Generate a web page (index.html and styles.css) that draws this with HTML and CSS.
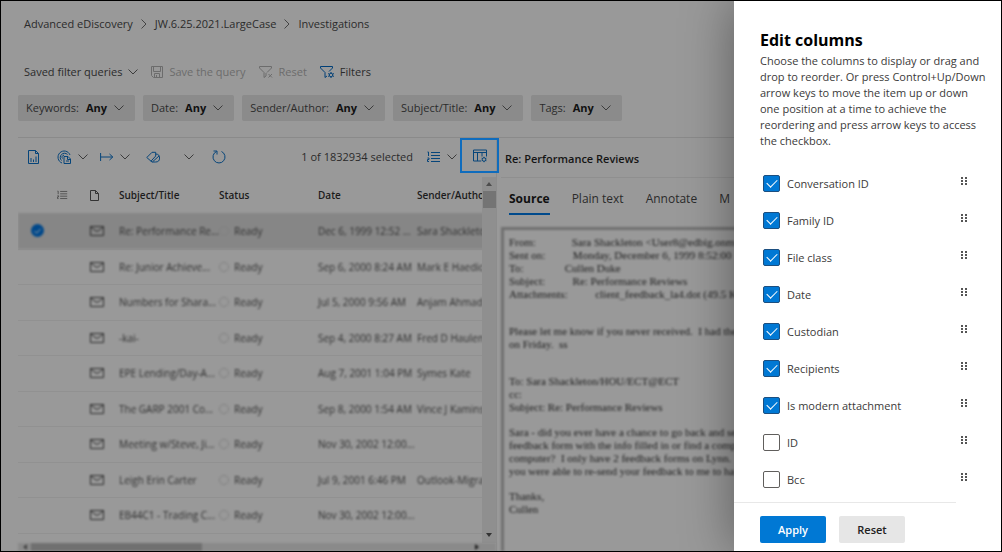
FILE: index.html
```html
<!DOCTYPE html>
<html lang="en">
<head>
<meta charset="utf-8">
<title>Advanced eDiscovery - Investigations</title>
<link rel="stylesheet" href="styles.css">
</head>
<body>
<svg class="defs" aria-hidden="true">
  <symbol id="chev" viewBox="0 0 10 6"><path d="M.5.5 5 5 9.500.5"/></symbol>
  <symbol id="mail" viewBox="0 0 14 10"><path d="M.5.5h13v9H.500zM.5 1 7 5.500 13.500 1"/></symbol>
  <symbol id="list" viewBox="0 0 14 12"><path d="M4 1.500h9M4 4.500h9M4 7.500h9M4 10.500h9M.5 1h1v4M.5 7h1.500v1.500H.5v2H2"/></symbol>
  <symbol id="grip" viewBox="0 0 6 8"><path d="M1 0v2M1 3v2M1 6v2M5 0v2M5 3v2M5 6v2"/></symbol>
</svg>
<main class="app">
  <nav class="crumbs" aria-label="Breadcrumb">
    <a href="#">Advanced eDiscovery</a>
    <svg class="sep" viewBox="0 0 6 10"><path d="M.5.5 5 5 .5 9.500"/></svg>
    <a href="#">JW.6.25.2021.LargeCase</a>
    <svg class="sep" viewBox="0 0 6 10"><path d="M.5.5 5 5 .5 9.500"/></svg>
    <a href="#">Investigations</a>
  </nav>
  <div class="queries">
    <button class="cmd">Saved filter queries <svg class="chev"><use href="#chev"/></svg></button>
    <button class="cmd off" disabled><svg class="ic12" viewBox="0 0 12 12"><path d="M.5.5h11v11h-9l-2-2zM2.500.5v5h7v-5M3.500 11.500v-4h5v4M5.500 9v2"/></svg>Save the query</button>
    <button class="cmd off" disabled><svg class="ic14" viewBox="0 0 14 12"><path d="M.5.5h12v1.500L8 6.500M.5.5V2L5 6.500v5l2-1.500V7M9.500 8l3.500 3.500M13 8l-3.500 3.500"/></svg>Reset</button>
    <button class="cmd"><svg class="ic14 blue" viewBox="0 0 14 12"><path d="M.5.5h12v1.500L9 5.500M.5.5V2L5 6.500v5l2-1.500"/><circle cx="11" cy="9" r="1.800"/><path d="M11 6v1M11 11v1M8.200 7.500l1 .6M13 10l.9.500M8.200 10.500l1-.6M13 8l.9-.5"/></svg>Filters</button>
  </div>
  <div class="pills">
    <button class="pill">Keywords: <b>Any</b><svg class="chev"><use href="#chev"/></svg></button>
    <button class="pill">Date: <b>Any</b><svg class="chev"><use href="#chev"/></svg></button>
    <button class="pill">Sender/Author: <b>Any</b><svg class="chev"><use href="#chev"/></svg></button>
    <button class="pill">Subject/Title: <b>Any</b><svg class="chev"><use href="#chev"/></svg></button>
    <button class="pill">Tags: <b>Any</b><svg class="chev"><use href="#chev"/></svg></button>
  </div>
  <div class="split">
    <section class="results">
      <div class="tools">
        <button class="tool" aria-label="Summary"><svg class="t11" viewBox="0 0 11 14"><path d="M.5.500h7l3 3v10H.500zM7.500.5v3h3"/><path class="bar" d="M3 12V8M5.500 12V9.500M8 12V6.500"/></svg></button>
        <button class="tool" aria-label="Find similar"><svg class="t15" viewBox="0 0 15 14"><path d="M5 13A6.200 6.200 0 1 1 13 5M4.500 10.500A4 4 0 1 1 10.500 4.500M5.500 8.500a2 2 0 0 1 1.500-3.300"/><path d="M7 6.500h4l2.500 2.500v4.500H7zM10.500 6.500v3h3M9 11h3"/></svg><svg class="chev"><use href="#chev"/></svg></button>
        <button class="tool" aria-label="Actions"><svg class="t14" viewBox="0 0 14 8"><path d="M.6 0v8M.6 4h12M9.500 1l3.300 3-3.300 3"/></svg><svg class="chev"><use href="#chev"/></svg></button>
        <button class="tool tag" aria-label="Tag"><svg class="t14" viewBox="0 0 14 12"><path d="M.8 6.500 6 1.300h3.700v3.700L5 10.200zM5 10.200l1 .8h3.500a4 4 0 0 0 .2-8M6.500 10.800 13 5"/></svg><svg class="chev"><use href="#chev"/></svg></button>
        <button class="tool refresh" aria-label="Refresh"><svg class="t14" viewBox="0 0 14 14"><path d="M9.500 1.500A6 6 0 1 1 4.500 1.500M1.500 1h3.500v3.500"/></svg></button>
        <span class="count">1 of 1832934 selected</span>
        <button class="tool group" aria-label="Group"><svg class="t14" viewBox="0 0 14 12"><use href="#list"/></svg><svg class="chev"><use href="#chev"/></svg></button>
        <button class="columns" aria-label="Edit columns"><svg class="t14" viewBox="0 0 14 13"><path d="M8 11.500H.5V.5h13V7M.5 3h13M4.500 3v8.500M9 3v4"/><circle cx="11" cy="10" r="1.800"/><path d="M11 7.300v1M11 11.700v1M8.600 8.700l1 .5M12.400 10.700l1 .5M8.600 11.300l1-.5M12.400 9.200l1-.5"/></svg></button>
      </div>
      <div class="gridwrap">
        <div class="gridclip">
          <table class="grid">
            <thead>
              <tr><th class="c1"></th><th class="c2"><svg class="hlist" viewBox="0 0 14 12"><use href="#list"/></svg></th><th class="c3"><svg class="hfile" viewBox="0 0 9 11"><path d="M.5.5h5l3 3v7h-8zM5.500.5v3h3"/></svg></th><th class="c4">Subject/Title</th><th class="c5">Status</th><th class="c6">Date</th><th class="c7">Sender/Author</th></tr>
            </thead>
            <tbody>
              <tr class="sel"><td><span class="dot"><svg viewBox="0 0 8 6"><path d="M.5 3 3 5.500 7.500.5"/></svg></span></td><td></td><td><svg class="mail"><use href="#mail"/></svg></td><td>Re: Performance Re...</td><td><i></i>Ready</td><td>Dec 6, 1999 12:52 ...</td><td>Sara Shackleton</td></tr>
              <tr><td></td><td></td><td><svg class="mail"><use href="#mail"/></svg></td><td>Re: Junior Achieve...</td><td><i></i>Ready</td><td>Sep 6, 2000 8:24 AM</td><td>Mark E Haedick</td></tr>
              <tr><td></td><td></td><td><svg class="mail"><use href="#mail"/></svg></td><td>Numbers for Shara...</td><td><i></i>Ready</td><td>Jul 5, 2000 9:56 AM</td><td>Anjam Ahmad</td></tr>
              <tr><td></td><td></td><td><svg class="mail"><use href="#mail"/></svg></td><td>-kai-</td><td><i></i>Ready</td><td>Sep 4, 2000 8:27 AM</td><td>Fred D Haulent</td></tr>
              <tr><td></td><td></td><td><svg class="mail"><use href="#mail"/></svg></td><td>EPE Lending/Day-A...</td><td><i></i>Ready</td><td>Aug 7, 2001 1:04 PM</td><td>Symes Kate</td></tr>
              <tr><td></td><td></td><td><svg class="mail"><use href="#mail"/></svg></td><td>The GARP 2001 Co...</td><td><i></i>Ready</td><td>Sep 8, 2000 1:54 AM</td><td>Vince J Kamins</td></tr>
              <tr><td></td><td></td><td><svg class="mail"><use href="#mail"/></svg></td><td>Meeting w/Steve, Ji...</td><td><i></i>Ready</td><td>Nov 30, 2002 12:00...</td><td></td></tr>
              <tr><td></td><td></td><td><svg class="mail"><use href="#mail"/></svg></td><td>Leigh Erin Carter</td><td><i></i>Ready</td><td>Jul 9, 2001 6:46 PM</td><td>Outlook-Migra</td></tr>
              <tr><td></td><td></td><td><svg class="mail"><use href="#mail"/></svg></td><td>EB44C1 - Trading C...</td><td><i></i>Ready</td><td>Nov 30, 2002 12:00...</td><td></td></tr>
            </tbody>
          </table>
        </div>
        <div class="vbar"><span class="up"></span><span class="vthumb"></span><span class="down"></span></div>
      </div>
      <div class="hbar"><span class="left"></span><span class="hthumb"></span><span class="right"></span></div>
    </section>
    <section class="reader">
      <h2 class="subject">Re: Performance Reviews</h2>
      <div class="tabs" role="tablist">
        <button class="tab on" role="tab">Source</button>
        <button class="tab" role="tab">Plain text</button>
        <button class="tab" role="tab">Annotate</button>
        <button class="tab" role="tab">M</button>
      </div>
      <div class="doc">
<p class="far">From:             Sara Shackleton &lt;User8@edbig.onm
Sent on:          Monday, December 6, 1999 8:52:00 
To:               Cullen Duke
Subject:          Re: Performance Reviews
Attachments:          client_feedback_la4.dot (49.5 KB)</p>
<p class="far">Please let me know if you never received.  I had the
on Friday.  ss</p>
<p>To: Sara Shackleton/HOU/ECT@ECT
cc:
Subject: Re: Performance Reviews</p>
<p>Sara - did you ever have a chance to go back and se
feedback form with the info filled in or find a comp
computer?  I only have 2 feedback forms on Lynn.
you were able to re-send your feedback to me to ha</p>
<p>Thanks,
Cullen</p>
      </div>
    </section>
  </div>
</main>
<aside class="panel" role="dialog" aria-labelledby="ptitle">
  <div class="pbody">
    <h1 id="ptitle">Edit columns</h1>
    <p class="help">Choose the columns to display or drag and drop to reorder. Or press Control+Up/Down arrow keys to move the item up or down one position at a time to achieve the reordering and press arrow keys to access the checkbox.</p>
    <ul class="cols">
      <li><label><input type="checkbox" checked>Conversation ID</label><svg class="grip"><use href="#grip"/></svg></li>
      <li><label><input type="checkbox" checked>Family ID</label><svg class="grip"><use href="#grip"/></svg></li>
      <li><label><input type="checkbox" checked>File class</label><svg class="grip"><use href="#grip"/></svg></li>
      <li><label><input type="checkbox" checked>Date</label><svg class="grip"><use href="#grip"/></svg></li>
      <li><label><input type="checkbox" checked>Custodian</label><svg class="grip"><use href="#grip"/></svg></li>
      <li><label><input type="checkbox" checked>Recipients</label><svg class="grip"><use href="#grip"/></svg></li>
      <li><label><input type="checkbox" checked>Is modern attachment</label><svg class="grip"><use href="#grip"/></svg></li>
      <li><label><input type="checkbox">ID</label><svg class="grip"><use href="#grip"/></svg></li>
      <li><label><input type="checkbox">Bcc</label><svg class="grip"><use href="#grip"/></svg></li>
    </ul>
  </div>
  <div class="actions"><button class="apply">Apply</button><button class="reset">Reset</button></div>
</aside>
</body>
</html>
```
FILE: styles.css
```css
* { box-sizing: border-box; }
body {
  margin: 0;
  height: 100vh;
  border: 1px solid #000;
  overflow: hidden;
  position: relative;
  background: #999;
  color: #2b2b2b;
  font: 11px/16px "Open Sans", "Noto Sans", sans-serif;
}
button { font: inherit; color: inherit; background: none; border: 0; padding: 0; }
svg { fill: none; stroke: currentColor; flex: none; display: block; }
.defs { position: absolute; width: 0; height: 0; }
.chev { width: 10px; height: 6px; color: #3c3c3c; }

.app { height: 100%; display: flex; flex-direction: column; padding-left: 17px; }
.crumbs { display: flex; align-items: center; gap: 8px; padding: 15px 0 0 6px; }
.crumbs a { color: inherit; text-decoration: none; }
.sep { width: 6px; height: 10px; color: #444; }
.queries { display: flex; gap: 13px; padding: 32px 0 0 6px; }
.cmd { display: flex; align-items: center; gap: 6px; }
.off { color: #6c6c6c; }
.ic12 { width: 12px; height: 12px; }
.ic14 { width: 14px; height: 12px; }
.blue { color: #003f77; }
.pills { display: flex; gap: 8px; padding-top: 15px; }
.pill { display: flex; align-items: center; gap: 7px; height: 26px; padding: 0 11px 0 8px; background: #8b8b8b; border-radius: 2px; }
.pill b { font-weight: 700; color: #111; }

.split { flex: 1; min-height: 0; display: flex; margin-top: 16px; border-top: 1px solid #8a8a8a; }
.results { width: 479px; flex: none; display: flex; flex-direction: column; border-right: 1px solid #8d8d8d; }
.tools { display: flex; align-items: center; height: 39px; padding: 0 0 2px 10px; color: #06457a; }
.tool { display: flex; align-items: center; gap: 6px; margin-right: 12px; }
.tool:first-child { margin-right: 18px; }
.tag { gap: 24px; margin: 0 18px 0 4px; }
.t11 { width: 11px; height: 14px; }
.t14 { width: 14px; height: 14px; }
.t15 { width: 15px; height: 14px; }
.count { margin-left: auto; color: #2b2b2b; }
.group { margin: 0 3px 0 14px; }
.columns { width: 39px; height: 35px; flex: none; display: grid; place-items: center; border: 2px solid #0f6cbd; margin: 0 -3px 2px 0; z-index: 1; }

.gridwrap { flex: 1; min-height: 0; display: flex; }
.gridclip { flex: 1; min-width: 0; overflow: hidden; }
.grid { width: 520px; table-layout: fixed; border-collapse: collapse; }
.grid th, .grid td { padding: 0; text-align: left; white-space: nowrap; font-size: 10px; }
.grid th { height: 36px; font-weight: 600; color: #1c1c1c; }
.c1 { width: 39px; }
.c2 { width: 33px; }
.c3 { width: 29px; }
.c4 { width: 100px; }
.c5 { width: 99px; }
.c6 { width: 99px; }
.hlist { width: 11px; height: 10px; color: #444; }
.hfile { width: 9px; height: 11px; color: #333; }
.grid tbody { filter: blur(1px); }
.grid tbody tr { height: 36px; border-bottom: 1px solid #919191; color: #303030; }
.grid tbody tr:nth-child(even) { height: 35px; }
.sel { background: #868686; }
.mail { width: 14px; height: 10px; color: #2c2c2c; }
.grid i { display: inline-block; width: 10px; height: 10px; margin-right: 5px; border: 1px solid #808080; border-radius: 50%; vertical-align: -1px; }
.dot { display: grid; place-items: center; width: 13px; height: 13px; margin-left: 13px; border-radius: 50%; background: #00488a; color: #aaa; }
.dot svg { width: 7px; height: 6px; }
.vbar { width: 14px; flex: none; display: flex; flex-direction: column; align-items: center; background: #8f8f8f; }
.up, .down { border: 3px solid transparent; }
.up { border-bottom: 4px solid #4d4d4d; border-top: 0; margin: 5px 0; }
.vthumb { width: 13px; height: 17px; background: #747474; }
.down { border-top: 4px solid #333; border-bottom: 0; margin: auto 0 6px; }
.hbar { height: 8px; display: flex; align-items: center; background: #8a8a8a; filter: blur(1px); }
.hthumb { width: 171px; height: 8px; background: #707070; }
.left, .right { border: 3px solid transparent; }
.left { border-right: 4px solid #444; border-left: 0; margin: 0 4px 0 5px; }
.right { border-left: 4px solid #222; border-right: 0; margin: 0 17px 0 auto; }

.reader { flex: 1; min-width: 0; display: flex; flex-direction: column; padding-left: 4px; }
.subject { margin: 0; padding: 13px 0 10px 4px; font-size: 11px; line-height: 16px; font-weight: 600; color: #151515; border-bottom: 1px solid #8f8f8f; }
.tabs { display: flex; gap: 22px; padding: 10px 0 12px 8px; }
.tab { font-size: 12px; line-height: 22px; padding-bottom: 3px; border-bottom: 2px solid transparent; }
.on { font-weight: 700; color: #111; border-color: #004a8c; }
.doc { flex: 1; min-height: 0; overflow: hidden; padding: 6px 6px 0 5px; border: 3px solid #707070; border-bottom: 0; color: #202020; font: 11px/13px "Liberation Serif", serif; filter: blur(1px); }
.doc p { margin: 0 0 12px; white-space: pre; }
.doc .far { margin-bottom: 24px; }

.panel { position: absolute; top: 0; right: 0; bottom: 0; width: 267px; display: flex; flex-direction: column; background: #fff; color: #3b3a39; box-shadow: 0 0 48px rgba(0, 0, 0, .4); z-index: 2; }
.pbody { flex: 1; min-height: 0; padding: 28px 14px 0 26px; }
h1 { margin: 0; font-size: 16px; line-height: 22px; font-weight: 700; color: #000; }
.help { margin: 2px 0 0; line-height: 16px; }
.cols { margin: 16px 0 0; padding: 0 20px 0 3px; list-style: none; }
.cols li { display: flex; align-items: center; justify-content: space-between; height: 37px; }
.cols label { display: flex; align-items: center; gap: 7px; }
.cols input { appearance: none; display: grid; place-items: center; width: 17px; height: 17px; margin: 0; border: 1px solid #605e5c; border-radius: 2px; background: #fff; }
.cols input:checked { border-color: #1c4f80; background: #0078d4; }
.cols input:checked::before { content: ""; width: 9px; height: 5px; border: solid #fff; border-width: 0 0 1px 1px; transform: rotate(-45deg); margin-bottom: 3px; }
.grip { width: 6px; height: 8px; stroke-width: 2; stroke: #555; margin-bottom: 5px; }
.actions { display: flex; gap: 13px; margin-right: 45px; padding: 13px 0 8px 26px; border-top: 1px solid #e8e8e8; }
.actions button { width: 66px; height: 27px; border-radius: 2px; font-weight: 600; }
.apply { background: #0078d4; color: #fff; }
.reset { background: #e6e6e6; color: #222; }
```
